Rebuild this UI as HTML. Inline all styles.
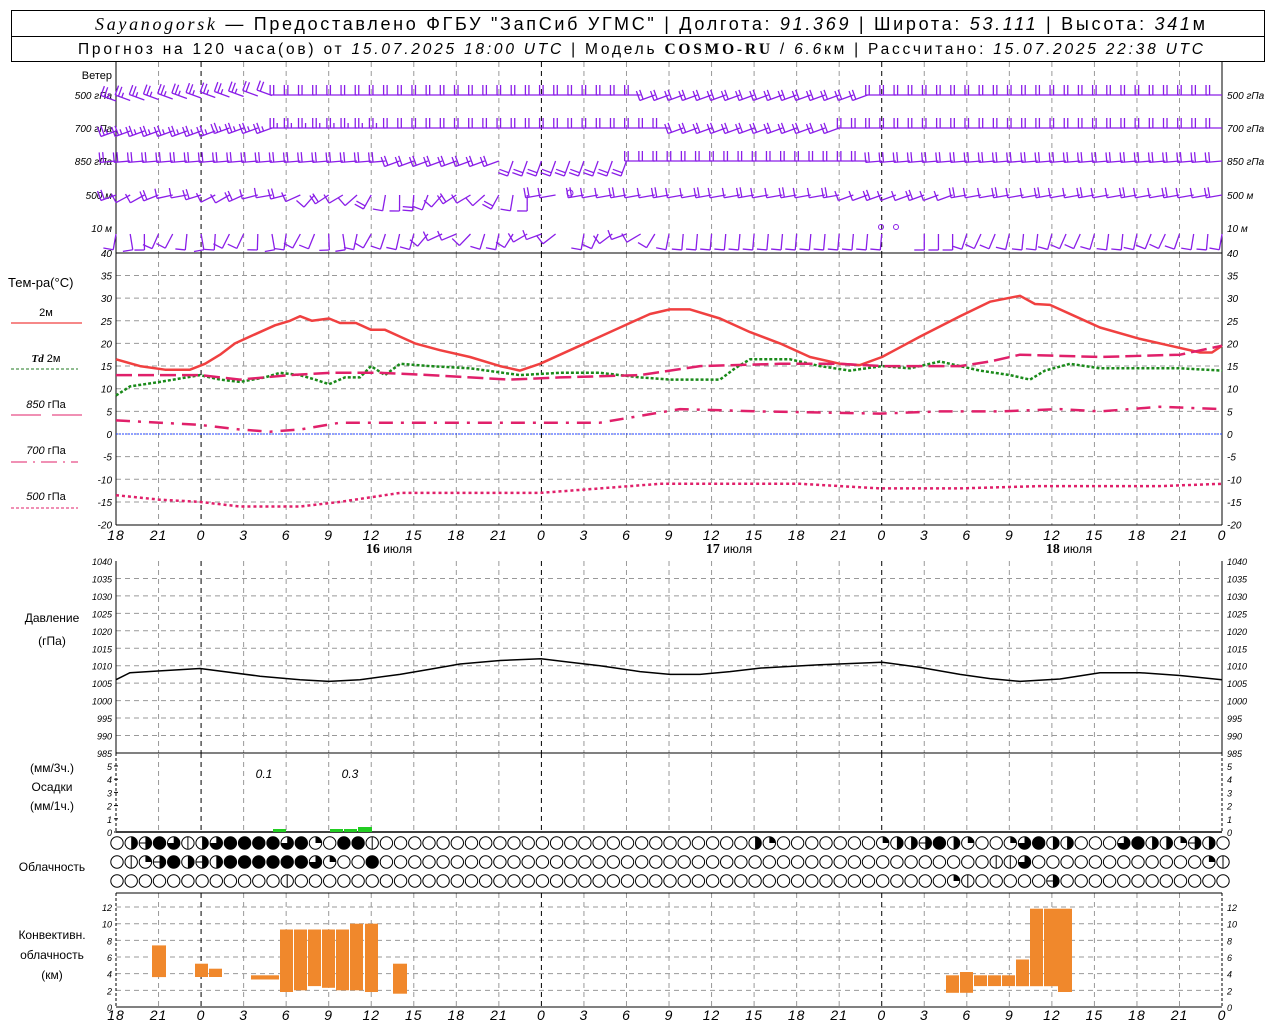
<!DOCTYPE html>
<html><head><meta charset="utf-8"><style>
html,body{margin:0;padding:0;background:#fff;width:1280px;height:1024px;overflow:hidden}
svg{display:block}
text{font-family:"Liberation Sans",sans-serif}
.it{font-style:italic}
</style></head><body>
<svg id="s" width="1280" height="1024" xmlns="http://www.w3.org/2000/svg">
<rect x="11.5" y="10.5" width="1253" height="51" fill="none" stroke="#000"/>
<line x1="11" y1="36.5" x2="1265" y2="36.5" stroke="#000"/>
<text x="95" y="30" font-size="18" textLength="1110" lengthAdjust="spacing"><tspan font-family="Liberation Serif" font-style="italic">Sayanogorsk</tspan> — Предоставлено ФГБУ "ЗапСиб УГМС" | Долгота: <tspan font-style="italic">91.369</tspan> | Широта: <tspan font-style="italic">53.111</tspan> | Высота: <tspan font-style="italic">341</tspan>м</text>
<text x="78" y="54" font-size="15.5" textLength="1125" lengthAdjust="spacing">Прогноз на 120 часа(ов) от <tspan font-style="italic">15.07.2025 18:00 UTC</tspan>  | Модель <tspan font-family="Liberation Serif" font-weight="bold">COSMO-RU</tspan> / <tspan font-style="italic">6.6</tspan>км | Рассчитано: <tspan font-style="italic">15.07.2025 22:38 UTC</tspan></text>
<g id="g"></g>
</svg>
<script>
var g=document.getElementById('g'),h='';
function X(t){return 116+t*14.18;}
function L(x1,y1,x2,y2,c,w,d){h+='<line x1="'+x1+'" y1="'+y1+'" x2="'+x2+'" y2="'+y2+'" stroke="'+c+'" stroke-width="'+(w||1)+'"'+(d?' stroke-dasharray="'+d+'"':'')+'/>';}
function T(x,y,s,sz,a,extra){h+='<text x="'+x+'" y="'+y+'" font-size="'+sz+'" text-anchor="'+(a||'start')+'" '+(extra||'')+'>'+s+'</text>';}
function vgrid(y1,y2){for(var t=3;t<78;t+=3){var day=(t==6||t==30||t==54);L(X(t),y1,X(t),y2,day?'#000':'#999',1,'5,4');}}
function tl(y){var seq=[18,21,0,3,6,9,12,15];for(var i=0;i<=26;i++){var v=seq[i%8];T(X(i*3),y,v,14,'middle','class="it" letter-spacing="1"');}}
vgrid(62,253);
L(116,62,116,253,'#000');L(1222,62,1222,253,'#000');
T(112,79,'Ветер',11,'end');
var rows=[[95,'500 гПа'],[128,'700 гПа'],[161,'850 гПа'],[195,'500 м'],[228,'10  м']];
rows.forEach(function(r){T(112,r[0]+4,r[1],10,'end','class="it"');T(1227,r[0]+4,r[1],10,'start','class="it"');});
var P='#8a1ee8';
function barb(x,y,ang,n){var len=16,a=ang*Math.PI/180;var ex=x+len*Math.cos(a),ey=y-len*Math.sin(a);L(x,y,ex,ey,P,1.3);
 for(var k=0;k<n;k++){var f=1-k*0.22;var bx=x+len*f*Math.cos(a),by=y-len*f*Math.sin(a);var pa=a-Math.PI/2;var bl=(k==n-1&&n>2)?5:10;L(bx,by,bx+bl*Math.cos(pa),by-bl*Math.sin(pa),P,1.3);}}
for(var t=0;t<=78;t++){var x=X(t);
 var a0=(t<12)?160:(t<30?180:(t<54?(t<38?180:200):180));var n0=(t<10)?3:2;barb(x,95+(t<12?(6-t*0.5):0),a0,n0);
 var a1=(t<12)?200:(t<22?180:(t<40?180:(t<52?200:180)));barb(x,128+(t<8?3:0),a1,t<20?3:2);
 var a2=(t<20)?185:(t<28?200:(t<37?250:(t<54?180:185)));barb(x,161,a2,2);
 var a3=(t<14)?200+10*Math.sin(t):(t<30?240+30*Math.sin(t*0.7):(t<52?190:(t<60?200:190)));if(t!=32)barb(x,195,a3,t%3?1:2);
 var a4=(t<20)?260+20*Math.sin(t*1.3):(t<40?230+30*Math.sin(t):(t<55?265:(t<60?270:255+10*Math.sin(t))));if(t!=55&&t!=56&&t!=32)barb(x,228+6,a4,1);}
h+='<circle cx="570" cy="193" r="3" fill="none" stroke="'+P+'"/><circle cx="881" cy="227" r="2.5" fill="none" stroke="'+P+'"/><circle cx="896" cy="227" r="2.5" fill="none" stroke="'+P+'"/>';
function yT(v){return 434-4.53*v;}
for(var v=-15;v<=35;v+=5)L(116,yT(v),1222,yT(v),'#999',1,'5,4');
vgrid(253,525);
L(116,253,1222,253,'#000');L(116,525,1222,525,'#000');L(116,253,116,525,'#000');L(1222,253,1222,525,'#000');
L(116,434,1222,434,'#2040ff',1,'2,1');
for(var v=-20;v<=40;v+=5){T(112,yT(v)+4,v,10,'end','class="it"');T(1227,yT(v)+4,v,10,'start','class="it"');}
tl(540);
T(389,553,'<tspan font-family="Liberation Serif" font-weight="bold" font-size="14">16</tspan> июля',12,'middle');
T(729,553,'<tspan font-family="Liberation Serif" font-weight="bold" font-size="14">17</tspan> июля',12,'middle');
T(1069,553,'<tspan font-family="Liberation Serif" font-weight="bold" font-size="14">18</tspan> июля',12,'middle');
T(8,287,'Тем-ра(°С)',13);
T(46,316,'2м',11,'middle');L(11,323,82,323,'#f04040',1.2);
T(46,362,'<tspan font-family="Liberation Serif" font-style="italic" font-weight="bold">Td</tspan>  2м',11,'middle');L(11,369,78,369,'#207a20',1,'3,2');
T(46,408,'<tspan class="it">850</tspan> гПа',11,'middle');L(11,415,41,415,'#e0206a');L(52,415,82,415,'#e0206a');
T(46,454,'<tspan class="it">700</tspan> гПа',11,'middle');L(11,462,78,462,'#e0206a',1,'16,6,2,6');
T(46,500,'<tspan class="it">500</tspan> гПа',11,'middle');L(11,508,78,508,'#e0206a',1,'3,2');
function curveX(pts,c,w,d,f){var s='';pts.forEach(function(p,i){s+=(i?'L':'M')+p[0]+' '+f(p[1]).toFixed(1);});h+='<path d="'+s+'" fill="none" stroke="'+c+'" stroke-width="'+w+'" stroke-linejoin="round"'+(d?' stroke-dasharray="'+d+'"':'')+'/>';}
curveX([[116,16.5],[140,15],[165,14.2],[190,14.2],[205,15.5],[220,17.5],[235,20],[255,22],[275,24],[290,25],[300,26],[312,25],[329,25.5],[340,24.5],[356,24.5],[371,23],[385,23],[400,21.5],[415,20],[440,18.5],[470,17],[500,15],[520,14],[540,15.5],[570,18.5],[600,21.5],[630,24.5],[650,26.5],[670,27.5],[690,27.5],[720,25.5],[750,22.5],[780,20],[810,17],[840,15.5],[860,15.2],[882,17],[920,21.5],[960,26],[990,29.2],[1020,30.5],[1035,28.7],[1050,28.5],[1075,26],[1100,23.5],[1140,21],[1170,19.5],[1200,18],[1212,18],[1222,19.5]],'#f04040',2.5,null,yT);
curveX([[116,8.5],[130,10.5],[160,11.5],[200,13],[220,12],[240,11.5],[265,12.5],[280,13.5],[300,13],[315,12],[329,11],[345,12.5],[360,12.5],[371,15],[385,13],[400,15.5],[430,15],[470,14.5],[520,13],[560,13.5],[600,13.5],[640,12.5],[670,12],[720,12],[735,14.5],[750,16.5],[790,16.5],[820,15],[850,14],[882,15],[910,14.5],[940,16],[960,15],[980,14],[1010,13],[1030,12],[1045,14],[1070,15.5],[1100,14.5],[1180,14.5],[1222,14]],'#1a8a1a',2.5,'3,2',yT);
curveX([[116,13],[200,13],[240,12],[290,13],[330,13.5],[380,13.5],[430,13],[470,12.5],[510,12],[560,12.5],[640,13],[700,15],[780,15.5],[840,15.5],[882,15],[960,15],[990,16],[1020,17.5],[1100,17],[1180,17.5],[1222,19.5]],'#e0206a',2.5,'16,6',yT);
curveX([[116,3],[160,2.5],[200,2],[240,1],[270,0.5],[300,1],[340,2.5],[400,2.5],[540,2.5],[600,2.5],[640,4],[680,5.5],[760,5],[880,4.5],[940,5],[1000,5],[1060,5.5],[1100,5],[1160,6],[1222,5.5]],'#e0206a',2.5,'14,8,3,8',yT);
curveX([[116,-13.5],[160,-14.5],[200,-15],[240,-16],[300,-16],[340,-15],[400,-13],[540,-13],[600,-12],[660,-11],[800,-11],[880,-12],[960,-12],[1040,-11.5],[1160,-11.5],[1222,-11]],'#e0206a',2.5,'3,3',yT);
function yP(v){return 561+(1040-v)*3.49;}
for(var v=990;v<=1035;v+=5)L(116,yP(v),1222,yP(v),'#999',1,'5,4');
vgrid(561,753);
L(116,561,116,753,'#000');L(1222,561,1222,753,'#000');L(116,753,1222,753,'#000');
for(var v=985;v<=1040;v+=5){T(112,yP(v)+4,v,9,'end','class="it"');T(1227,yP(v)+4,v,9,'start','class="it"');}
T(52,622,'Давление',12,'middle');T(52,645,'(гПа)',12,'middle');
curveX([[116,1006],[130,1008],[160,1008.5],[200,1009.2],[260,1007],[300,1006],[329,1005.5],[360,1006],[400,1007.5],[430,1009],[460,1010.5],[500,1011.5],[541,1012],[570,1011],[600,1010],[640,1008.3],[670,1007.5],[700,1007.5],[730,1008.3],[760,1009.3],[820,1010.3],[882,1011],[920,1009.5],[960,1007.5],[990,1006.3],[1020,1005.5],[1060,1006.2],[1100,1008],[1140,1008],[1180,1007.2],[1222,1006]],'#000',1.5,null,yP);
function yR(v){return 832-13.2*v;}
vgrid(753,832);
L(116,753,116,832,'#000',1,'3,2');L(1222,753,1222,832,'#000',1,'3,2');L(116,832,1222,832,'#000',1.5);
for(var v=0;v<=5;v++){T(112,yR(v)+4,v,9,'end','class="it"');T(1227,yR(v)+4,v,9,'start','class="it"');L(114,yR(v),118,yR(v),'#000');}
T(52,772,'(мм/3ч.)',12,'middle');T(52,791,'Осадки',12,'middle');T(52,810,'(мм/1ч.)',12,'middle');
T(264,778,'0.1',12,'middle','class="it"');T(350,778,'0.3',12,'middle','class="it"');
h+='<rect x="273" y="829" width="13" height="3" fill="#22cc22"/><rect x="330" y="829" width="13" height="3" fill="#22cc22"/><rect x="344" y="829" width="13" height="3" fill="#22cc22"/><rect x="358" y="827" width="14" height="5" fill="#22cc22"/>';
T(52,871,'Облачность',12,'middle');
var R=[
'0264352344443410445'+'0000000000000000000000000'+'0'+'21'+'0000000'+'1226421001342200034221620',
'0516426244444431004'+'0000000000000000000000000000000000000000000'+'553'+'000000000000'+'150',
'0000000000005000000'+'0000000000000000000000000000000000000000'+'15'+'00000'+'6'+'000000000000'];
var ys=[843,862,881];
function cloud(x,y,c){var r=6.2;h+='<circle cx="'+x+'" cy="'+y+'" r="'+r+'" fill="#fff" stroke="#000"/>';
 if(c=='4')h+='<circle cx="'+x+'" cy="'+y+'" r="'+r+'" fill="#000"/>';
 else if(c=='2')h+='<path d="M'+x+' '+(y-r)+'A'+r+' '+r+' 0 0 1 '+x+' '+(y+r)+'Z" fill="#000"/>';
 else if(c=='3')h+='<path d="M'+x+' '+y+'L'+x+' '+(y-r)+'A'+r+' '+r+' 0 1 1 '+(x-r)+' '+y+'Z" fill="#000"/>';
 else if(c=='1')h+='<path d="M'+x+' '+y+'L'+x+' '+(y-r)+'A'+r+' '+r+' 0 0 1 '+(x+r)+' '+y+'Z" fill="#000"/>';
 else if(c=='5')L(x,y-r,x,y+r,'#000');
 else if(c=='6'){L(x-r,y,x+r,y,'#000');h+='<path d="M'+x+' '+(y-r)+'A'+r+' '+r+' 0 0 1 '+x+' '+(y+r)+'Z" fill="#000"/>';}}
for(var k=0;k<3;k++){var s=R[k];for(var i=0;i<=78;i++){cloud((117+i*14.18).toFixed(1)*1,ys[k],s.charAt(i)||'0');}}
function yC(v){return 1007-8.33*v;}
for(var v=2;v<=12;v+=2)L(116,yC(v),1222,yC(v),'#999',1,'5,4');
vgrid(893,1007);
L(116,893,1222,893,'#000');L(116,893,116,1007,'#000',1,'3,2');L(1222,893,1222,1007,'#000',1,'3,2');L(116,1007,1222,1007,'#000');
for(var v=0;v<=12;v+=2){T(112,yC(v)+4,v,9,'end','class="it"');T(1227,yC(v)+4,v,9,'start','class="it"');}
T(52,939,'Конвективн.',12,'middle');T(52,959,'облачность',12,'middle');T(52,979,'(км)',12,'middle');
[[152,166,3.6,7.4],[195,208,3.6,5.2],[209,222,3.6,4.6],[251,279,3.3,3.8],[280,293,1.8,9.3],[294,307,2,9.3],[308,321,2.5,9.3],[322,335,2.3,9.3],[336,349,2,9.3],[350,363,2,10],[365,378,1.8,10],[393,407,1.6,5.2],
[946,959,1.7,3.8],[960,973,1.7,4.2],[974,987,2.5,3.8],[988,1001,2.5,3.8],[1002,1015,2.5,3.8],[1016,1029,2.5,5.7],[1030,1043,2.5,11.8],[1044,1058,2.5,11.8],[1058,1072,1.8,11.8]].forEach(function(b){h+='<rect x="'+b[0]+'" y="'+yC(b[3]).toFixed(1)+'" width="'+(b[1]-b[0])+'" height="'+(yC(b[2])-yC(b[3])).toFixed(1)+'" fill="#f0882c"/>';});
tl(1020);
g.innerHTML=h;
</script>
</body></html>
